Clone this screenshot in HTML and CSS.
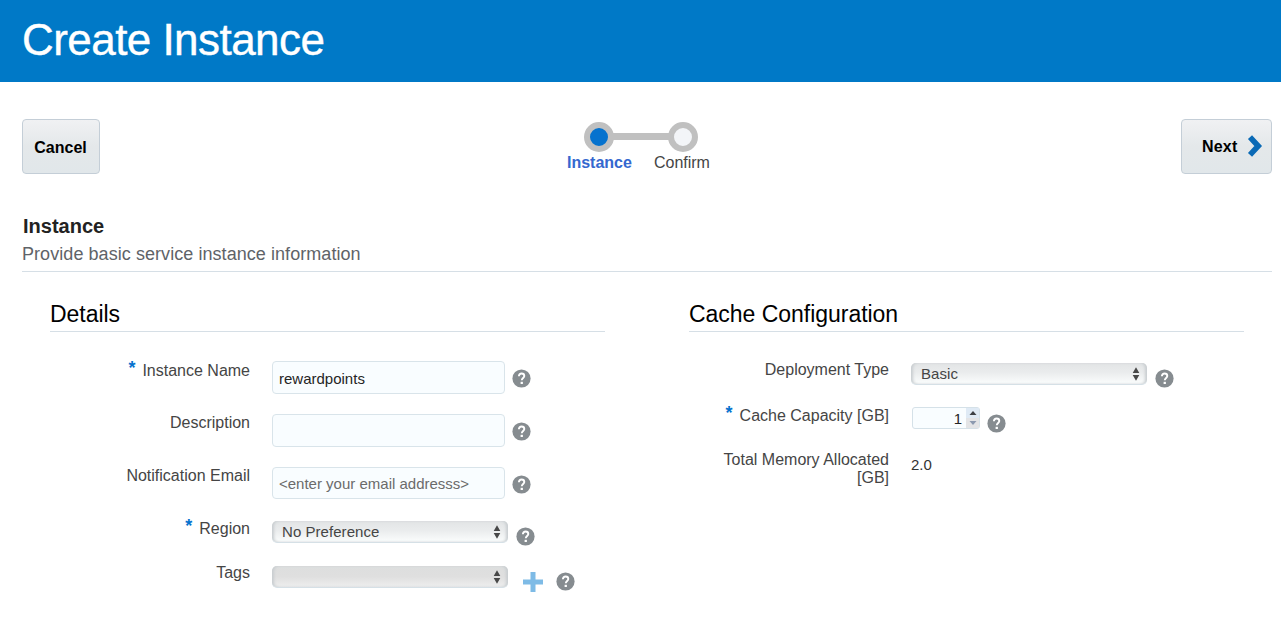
FILE: index.html
```html
<!DOCTYPE html>
<html lang="en">
<head>
<meta charset="utf-8">
<title>Create Instance</title>
<link rel="stylesheet" href="styles.css">
</head>
<body>
<svg class="defs" width="0" height="0" aria-hidden="true">
  <symbol id="help" viewBox="0 0 19 19">
    <circle cx="9.5" cy="9.5" r="9.1" fill="#868c90"/>
    <path d="M6.9 7.3C6.9 5.400 8 4.500 9.600 4.500s2.700 1 2.700 2.500c0 1.900-2.500 2.100-2.500 4.300" fill="none" stroke="#fff" stroke-width="1.9"/>
    <rect x="8.6" y="12.8" width="2.3" height="2.2" fill="#fff"/>
  </symbol>
  <symbol id="updown" viewBox="0 0 8 14">
    <path d="M4 0.3L7.3 6H0.7zM4 13.7L7.3 8H0.7z" fill="#484848"/>
  </symbol>
</svg>
<header class="banner"><h1>Create Instance</h1></header>
<main class="page">
  <nav class="toolbar">
    <button class="btn cancel">Cancel</button>
    <div class="train">
      <svg class="track" width="114" height="30" viewBox="0 0 114 30">
        <rect x="25" y="11" width="64" height="7" fill="#c0c0c0"/>
        <circle cx="15" cy="15" r="12" fill="#0572ce" stroke="#c0c0c0" stroke-width="6"/>
        <circle cx="99" cy="15" r="12" fill="#f3f5f8" stroke="#c0c0c0" stroke-width="6"/>
      </svg>
      <div class="stops"><span class="current">Instance</span><span>Confirm</span></div>
    </div>
    <button class="btn next">Next
      <svg width="16" height="22" viewBox="0 0 16 22"><path d="M3 2.200L11.200 11L3 19.800" fill="none" stroke="#0a6ab6" stroke-width="5.6"/></svg>
    </button>
  </nav>
  <section class="intro">
    <h2>Instance</h2>
    <p>Provide basic service instance information</p>
  </section>
  <div class="columns">
    <section class="panel">
      <h3>Details</h3>
      <div class="rows details">
        <div class="row"><label><b>*</b>Instance Name</label><input class="text" value="rewardpoints"><svg class="help"><use href="#help"/></svg></div>
        <div class="row"><label>Description</label><input class="text"><svg class="help"><use href="#help"/></svg></div>
        <div class="row"><label>Notification Email</label><input class="text short" placeholder="&lt;enter your email addresss&gt;"><svg class="help"><use href="#help"/></svg></div>
        <div class="row region"><label><b>*</b>Region</label><div class="select">No Preference<svg><use href="#updown"/></svg></div><svg class="help"><use href="#help"/></svg></div>
        <div class="row tags"><label>Tags</label><div class="select disabled"><svg><use href="#updown"/></svg></div><svg class="plus" viewBox="0 0 20 20"><path d="M10 0v20M0 10h20" stroke="#7ebbe6" stroke-width="5"/></svg><svg class="help"><use href="#help"/></svg></div>
      </div>
    </section>
    <section class="panel">
      <h3>Cache Configuration</h3>
      <div class="rows cache">
        <div class="row deploy"><label>Deployment Type</label><div class="select">Basic<svg><use href="#updown"/></svg></div><svg class="help"><use href="#help"/></svg></div>
        <div class="row capacity"><label><b>*</b>Cache Capacity [GB]</label>
          <div class="spinner"><span>1</span><div class="arrows">
            <i><svg width="8" height="4" viewBox="0 0 8 4"><path d="M0.5 4L4 0L7.500 4z" fill="#3c3f44"/></svg></i>
            <i class="off"><svg width="8" height="4" viewBox="0 0 8 4"><path d="M0.5 0L4 4L7.500 0z" fill="#8c9ab0"/></svg></i>
          </div></div><svg class="help"><use href="#help"/></svg></div>
        <div class="row memory"><label>Total Memory Allocated [GB]</label><output>2.0</output></div>
      </div>
    </section>
  </div>
</main>
</body>
</html>
```

FILE: styles.css
```css
* { box-sizing: border-box; }
body {
  margin: 0;
  height: 631px;
  overflow: hidden;
  background: #fff;
  color: #454545;
  font: 16px/18px "Liberation Sans", Arial, sans-serif;
}
h1, h2, h3, p { margin: 0; font-weight: normal; }
svg { display: block; flex: none; }
.defs { position: absolute; }

.banner { height: 82px; padding: 15px 0 0 22px; background: #0079c7; }
.banner h1 { color: #fff; font-size: 44px; line-height: 50px; letter-spacing: -0.55px; -webkit-text-stroke: 0.4px #fff; }

.page { padding: 37px 9px 0 22px; }
.toolbar { display: flex; justify-content: space-between; height: 55px; }
.btn {
  height: 55px;
  padding: 0;
  border: 1px solid #c4ced7;
  border-radius: 4px;
  background: linear-gradient(#f0f1f3, #e4e8ea 50%, #e1e7ea);
  color: #000;
  font: bold 16px/18px "Liberation Sans", Arial, sans-serif;
}
.cancel { width: 78px; padding: 2px 1px 0 0; }
.next { display: flex; align-items: center; gap: 10px; width: 91px; padding-left: 20px; letter-spacing: 0.2px; }
.next svg { margin-top: -1px; }

.train { width: 145px; margin-left: -2px; padding-top: 3px; }
.track { margin-left: 17px; }
.stops { display: flex; gap: 22px; padding-top: 2px; }
.current { color: #3468cf; font-weight: bold; }

.intro { height: 98px; padding-top: 41px; border-bottom: 1px solid #d6dfe6; }
.intro h2 { padding-left: 1px; color: #222; font-size: 20px; line-height: 22px; font-weight: bold; }
.intro p { margin-top: 7px; color: #5f6368; font-size: 18px; line-height: 20px; letter-spacing: 0.06px; }

.columns { display: flex; gap: 84px; padding: 28px 0 0 28px; }
.panel { width: 555px; }
.panel h3 { height: 32px; border-bottom: 1px solid #d6dfe6; color: #000; font-size: 23px; line-height: 28px; letter-spacing: -0.03px; }

.row { display: flex; align-items: flex-start; height: 53px; }
.row label { width: 200px; margin-right: 22px; text-align: right; }
.row b { margin-right: 7px; color: #0572ce; font-size: 18px; line-height: 14px; vertical-align: 2px; }
.details { padding-top: 29px; }
.cache { padding-top: 28px; }
.help { width: 19px; height: 19px; margin: 8px 0 0 7px; }

.text {
  width: 233px;
  height: 33px;
  padding: 2px 6px 0;
  border: 1px solid #d9e4ea;
  border-radius: 4px;
  background: #f9fdff;
  color: #252525;
  font: 15px/18px "Liberation Sans", Arial, sans-serif;
}
.text.short { height: 32px; padding-top: 1px; }
.text::placeholder { color: #6b6b6b; opacity: 1; }

.select {
  display: flex;
  align-items: center;
  justify-content: space-between;
  width: 236px;
  height: 22px;
  padding: 0 7px 0 10px;
  border-bottom: 1px solid #d5e0e6;
  border-radius: 5px;
  background: linear-gradient(#e2e4e5, #eaeced 45%, #f8fafa 90%);
  box-shadow: inset 3px 0 3px -1px #c8cdd0, inset -3px 0 3px -1px #c8cdd0;
  font-size: 15px;
  letter-spacing: 0.05px;
}
.select svg { width: 8px; height: 14px; margin-left: auto; }
.select.disabled { background: linear-gradient(#dddede, #dfdfdf 50%, #eeeeee); }

.region { height: 44px; }
.region label { margin-top: -1px; }
.region .select { margin-top: 1px; }
.region .help { margin: 7px 0 0 8px; }
.tags .select { margin-top: 2px; }
.plus { width: 20px; height: 20px; margin: 8px 0 0 15px; }
.tags .help { margin-left: 13px; }

.deploy { height: 46px; }
.deploy label { margin-top: 1px; }
.deploy .select { margin-top: 3px; }
.deploy .help { margin: 9px 0 0 8px; }
.capacity { height: 44px; }
.memory label { margin-top: 1px; }
.spinner {
  display: flex;
  width: 68px;
  height: 22px;
  margin: 1px 0 0 1px;
  border: 1px solid #d5e1e8;
  border-radius: 3px;
  background: #f9fdff;
  color: #252525;
}
.spinner span { flex: 1; padding: 2px 4px 0 0; font-size: 15px; text-align: right; }
.arrows { width: 13px; }
.arrows i { display: flex; align-items: center; justify-content: center; height: 10px; background: #dfeaf5; }
.arrows .off { background: #e3e4e6; }
.row output { padding-top: 6px; color: #333; font-size: 15px; }
```
